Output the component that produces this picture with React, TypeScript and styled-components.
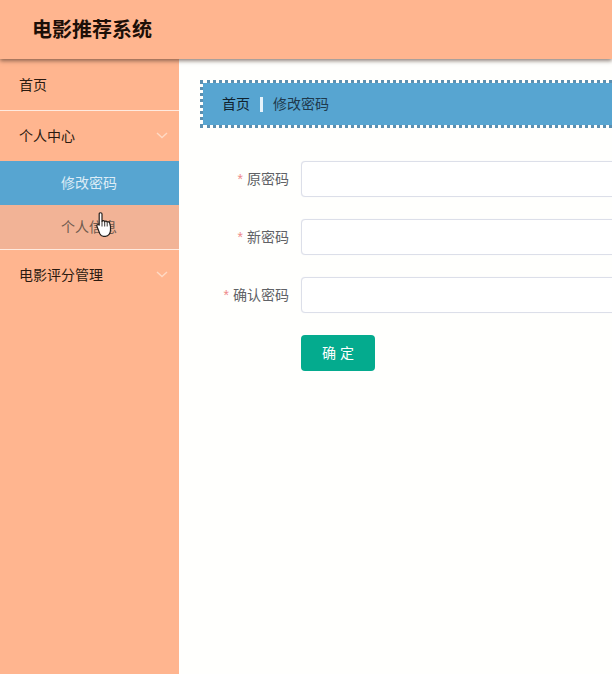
import styled, { createGlobalStyle } from "styled-components";

const GlobalStyle = createGlobalStyle`
  html, body {
    margin: 0;
    padding: 0;
    width: 612px;
    height: 674px;
    overflow: hidden;
    background: #fffffd;
    font-family: "Liberation Sans", "Noto Sans CJK SC", sans-serif;
  }
`;

const Chevron = () => (
  <ChevronIcon viewBox="0 0 12 7" fill="none">
    <path d="M1 1l5 4.5L11 1" stroke="#ffd9c4" strokeWidth="1.4" />
  </ChevronIcon>
);

const HandCursor = () => (
  <CursorIcon viewBox="0 0 16 25">
    <path
      d="M3.2 2c0-1.700 2.800-1.700 2.800 0v7.500c.3-1.200 2.500-1.200 2.700.3.4-1 2.300-.9 2.500.5.5-.8 2.300-.6 2.500.8l.8 3.400v3.500c0 3.400-2 6.300-5 6.300H7.500c-1.800 0-2.900-1-3.700-2.600L1 14.500c-.7-1.500.8-2.500 2.200-1.400z"
      fill="#fff"
      stroke="#26201d"
      strokeWidth="1.200"
      strokeLinejoin="round"
    />
    <path d="M6 9.500v5M8.700 10v4.500M11.200 11v3.500" stroke="#26201d" strokeWidth="0.9" />
  </CursorIcon>
);

const fields = [
  { label: "原密码" },
  { label: "新密码" },
  { label: "确认密码" },
];

const App = () => {
  return (
    <Page>
      <GlobalStyle />
      <Header>
        <Title>电影推荐系统</Title>
      </Header>
      <Body>
        <Sidebar>
          <MenuItem>首页</MenuItem>
          <Divider />
          <MenuItem>
            个人中心
            <Chevron />
          </MenuItem>
          <SubItem $active>修改密码</SubItem>
          <SubItem>
            个人信息
            <HandCursor />
          </SubItem>
          <Divider />
          <MenuItem>
            电影评分管理
            <Chevron />
          </MenuItem>
        </Sidebar>
        <Main>
          <Breadcrumb>
            <Crumb $root>首页</Crumb>
            <Separator />
            <Crumb>修改密码</Crumb>
          </Breadcrumb>
          <Form>
            {fields.map((field) => (
              <FormRow key={field.label}>
                <Label>
                  <Star>*</Star>
                  {field.label}
                </Label>
                <Input type="password" />
              </FormRow>
            ))}
            <SubmitButton>确 定</SubmitButton>
          </Form>
        </Main>
      </Body>
    </Page>
  );
};

const Page = styled.div`
  width: 612px;
  height: 674px;
  display: flex;
  flex-direction: column;
  overflow: hidden;
`;
const Header = styled.header`
  height: 59px;
  flex-shrink: 0;
  display: flex;
  align-items: center;
  padding-left: 32px;
  background: #ffb58f;
  box-shadow: 0 2px 4px rgba(70, 50, 40, 0.6);
  position: relative;
  z-index: 1;
`;
const Title = styled.h1`
  margin: 0;
  font-size: 20px;
  line-height: 28px;
  font-weight: 700;
  color: #1c0f08;
`;
const Body = styled.div`
  flex: 1;
  display: flex;
  min-height: 0;
`;
const Sidebar = styled.nav`
  width: 179px;
  flex-shrink: 0;
  padding-top: 1px;
  background: #ffb58f;
`;
const MenuItem = styled.div`
  height: 50px;
  box-sizing: border-box;
  display: flex;
  align-items: center;
  justify-content: space-between;
  padding: 0 11px 2px 19px;
  font-size: 14px;
  color: #2b1a10;
`;
const ChevronIcon = styled.svg`
  width: 12px;
  height: 7px;
`;
const Divider = styled.div`
  height: 1px;
  background: #ffeadf;
`;
const SubItem = styled.div<{ $active?: boolean }>`
  position: relative;
  height: 44px;
  box-sizing: border-box;
  display: flex;
  align-items: center;
  justify-content: center;
  padding: 0 1px 2px 0;
  font-size: 14px;
  color: ${(p) => (p.$active ? "#dcecf6" : "#6f5a4e")};
  background: ${(p) => (p.$active ? "#57a5d1" : "#f2b396")};
`;
const CursorIcon = styled.svg`
  position: absolute;
  left: 96px;
  top: 7px;
  width: 16px;
  height: 25px;
`;
const Main = styled.main`
  flex: 0 0 700px;
  padding: 21px 0 0 21px;
`;
const Breadcrumb = styled.div`
  height: 40px;
  display: flex;
  align-items: center;
  padding: 0 0 2px 19px;
  background: #57a5d1;
  background-clip: padding-box;
  border: 3px dotted #5b8fb0;
`;
const Crumb = styled.span<{ $root?: boolean }>`
  font-size: 14px;
  color: ${(p) => (p.$root ? "#10222e" : "#1f3a4d")};
`;
const Separator = styled.span`
  width: 3px;
  height: 15px;
  margin: 2px 10px 0 10px;
  background: #e6f3fb;
`;
const Form = styled.form`
  display: flex;
  flex-direction: column;
  gap: 22px;
  padding-top: 33px;
`;
const FormRow = styled.div`
  display: flex;
  align-items: center;
  height: 36px;
`;
const Label = styled.label`
  width: 89px;
  margin: -2px 12px 0 0;
  font-size: 14px;
  text-align: right;
  color: #606266;
`;
const Star = styled.span`
  margin-right: 4px;
  color: #ee8a8a;
`;
const Input = styled.input`
  width: 600px;
  height: 36px;
  box-sizing: border-box;
  border: 1px solid #dcdfe9;
  border-radius: 4px;
  background: #fff;
  box-shadow: 0 0 1px #e3e4ee;
  outline: none;
`;
const SubmitButton = styled.button`
  width: 74px;
  height: 36px;
  margin-left: 101px;
  padding: 0 0 2px;
  border: none;
  border-radius: 4px;
  background: #04ab8e;
  color: #fff;
  font-family: inherit;
  font-size: 14px;
  font-weight: 400;
`;

export default App;
